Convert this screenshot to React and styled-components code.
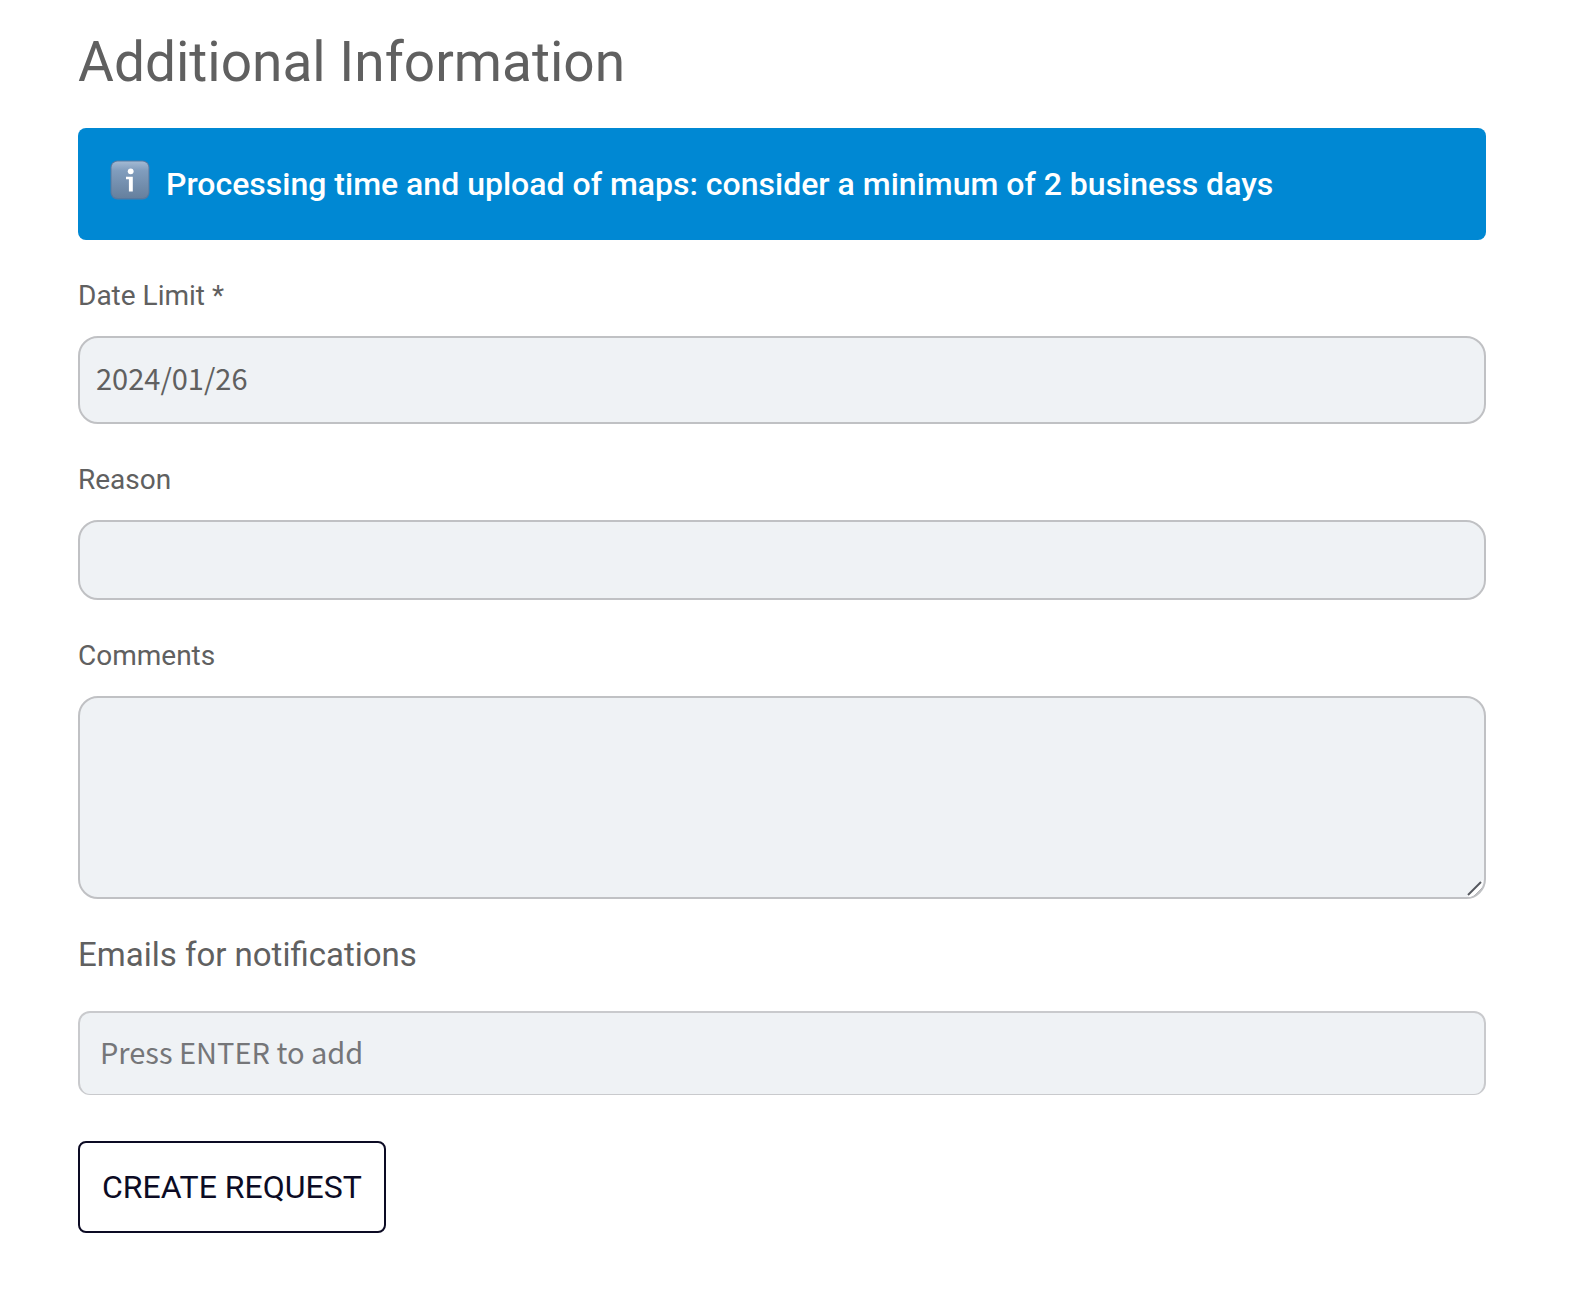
import React, { useState } from 'react';
import styled, { createGlobalStyle } from 'styled-components';

const App = () => {
  const [date, setDate] = useState('2024/01/26');
  const [reason, setReason] = useState('');
  const [comments, setComments] = useState('');
  const [email, setEmail] = useState('');

  const submitHandler = (e) => {
    e.preventDefault();
  };

  return (
    <>
      <GlobalStyle />
      <StForm onSubmit={submitHandler}>
        <StTitle>Additional Information</StTitle>

        <StBanner>
          <InfoIcon />
          <p>Processing time and upload of maps: consider a minimum of 2 business days</p>
        </StBanner>

        <StField>
          <StLabel htmlFor="date">Date Limit *</StLabel>
          <StInput id="date" $height="88px" value={date} onChange={(e) => setDate(e.target.value)} />
        </StField>

        <StField>
          <StLabel htmlFor="reason">Reason</StLabel>
          <StInput id="reason" $height="80px" value={reason} onChange={(e) => setReason(e.target.value)} />
        </StField>

        <StField>
          <StLabel htmlFor="comments">Comments</StLabel>
          <StTextareaBox>
            <StTextarea id="comments" value={comments} onChange={(e) => setComments(e.target.value)} />
            <StGrip viewBox="0 0 18 18" aria-hidden="true">
              <path d="M1 17 L17 1 Q17 13 4 18 Z" fill="#fff" />
              <path d="M2 16 L15 3" stroke="#55585f" strokeWidth="2" />
              <path d="M8 17 L16 9" stroke="#b5b6b9" strokeWidth="1" />
            </StGrip>
          </StTextareaBox>
        </StField>

        <StField>
          <StLabel htmlFor="email" $large>
            Emails for notifications
          </StLabel>
          <StEmailInput
            id="email"
            $height="84px"
            placeholder="Press ENTER to add"
            value={email}
            onChange={(e) => setEmail(e.target.value)}
          />
        </StField>

        <StButton type="submit">CREATE REQUEST</StButton>
      </StForm>
    </>
  );
};

const InfoIcon = () => (
  <StIcon viewBox="0 0 40 40" aria-hidden="true">
    <defs>
      <linearGradient id="tile" x1="0" y1="0" x2="0" y2="1">
        <stop offset="0" stopColor="#a3b9d3" />
        <stop offset="0.25" stopColor="#819dbd" />
        <stop offset="1" stopColor="#66809e" />
      </linearGradient>
    </defs>
    <rect x="0.5" y="0.5" width="39" height="39" rx="7" fill="#56789f" />
    <rect x="1.5" y="1.5" width="37" height="36.5" rx="6" fill="url(#tile)" />
    <circle cx="20.7" cy="11.3" r="2.9" fill="#fff" />
    <path d="M16 16.8h6.8v14.8h-3.9V19.2H16z" fill="#fff" />
  </StIcon>
);

export default App;

const GlobalStyle = createGlobalStyle`
  * {
    box-sizing: border-box;
  }
  body {
    margin: 0;
    background-color: #fff;
    color: #606060;
    font-family: Roboto, sans-serif;
  }
`;

const StForm = styled.form`
  display: flex;
  flex-direction: column;
  align-items: stretch;
  padding: 28px 92px 60px 78px;
`;

const StTitle = styled.h1`
  margin: 0 0 32px;
  font-size: 55px;
  font-weight: 400;
  line-height: 68px;
`;

const StBanner = styled.div`
  display: flex;
  align-items: flex-start;
  gap: 16px;
  min-height: 112px;
  margin-bottom: 36px;
  padding: 32px;
  border-radius: 8px;
  background-color: #0088d3;
  color: #fff;

  p {
    margin: 0;
    font-size: 32px;
    font-weight: 500;
    line-height: 48px;
  }
`;

const StIcon = styled.svg`
  flex: none;
  width: 40px;
  height: 40px;
`;

const StField = styled.div`
  display: flex;
  flex-direction: column;
  margin-bottom: 36px;
`;

const StLabel = styled.label`
  margin-bottom: ${({ $large }) => ($large ? '36px' : '20px')};
  font-size: ${({ $large }) => ($large ? '33px' : '28px')};
  line-height: 40px;
`;

const StInput = styled.input`
  width: 100%;
  height: ${({ $height }) => $height};
  padding: 0 16px 6px;
  border: 2px solid #c0c1c4;
  border-radius: 20px;
  outline: none;
  background-color: #eff2f5;
  color: #606060;
  font-family: 'Noto Sans CJK SC', sans-serif;
  font-size: 29px;
`;

const StEmailInput = styled(StInput)`
  margin-bottom: 10px;
  padding: 0 20px 6px;
  border-color: #c9cacd;
  border-bottom-width: 1px;
  border-radius: 12px;

  &::placeholder {
    color: #757679;
  }
`;

const StTextareaBox = styled.div`
  position: relative;
  display: flex;
`;

const StTextarea = styled.textarea`
  width: 100%;
  height: 203px;
  padding: 16px;
  border: 2px solid #c0c1c4;
  border-radius: 20px;
  outline: none;
  resize: vertical;
  background-color: #eff2f5;
  color: #606060;
  font-family: 'Noto Sans CJK SC', sans-serif;
  font-size: 29px;

  &::-webkit-resizer {
    background-color: transparent;
  }
`;

/* sits over the corner of the textarea */
const StGrip = styled.svg`
  position: absolute;
  right: 2px;
  bottom: 2px;
  width: 18px;
  height: 18px;
  pointer-events: none;
`;

const StButton = styled.button`
  align-self: flex-start;
  height: 92px;
  padding: 0 22px;
  border: 2px solid #0c0b24;
  border-radius: 8px;
  background-color: #fff;
  color: #0c0b24;
  font-family: Roboto, sans-serif;
  font-size: 32px;
  cursor: pointer;
`;
